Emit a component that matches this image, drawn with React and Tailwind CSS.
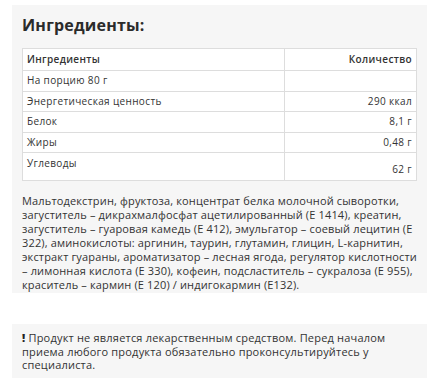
const rows = [
  ['На порцию 80 г', ''],
  ['Энергетическая ценность', '290 ккал'],
  ['Белок', '8,1 г'],
  ['Жиры', '0,48 г'],
];

const composition = [
  'Мальтодекстрин, фруктоза, концентрат белка молочной сыворотки,',
  'загуститель – дикрахмалфосфат ацетилированный (E 1414), креатин,',
  'загуститель – гуаровая камедь (E 412), эмульгатор – соевый лецитин (E',
  '322), аминокислоты: аргинин, таурин, глутамин, глицин, L-карнитин,',
  'экстракт гуараны, ароматизатор – лесная ягода, регулятор кислотности',
  '– лимонная кислота (E 330), кофеин, подсластитель – сукралоза (E 955),',
  'краситель – кармин (E 120) / индигокармин (E132).',
];

export default function App() {
  return (
    <div className="bg-white w-[439px] h-[386px] pt-[5px] text-[#333]" style={{ fontFamily: '"Open Sans", "Noto Sans", sans-serif' }}>
      <div className="mx-[12px] bg-[#f6f6f6] px-[10px] pt-[8px] pb-[1px]">
        <h2 className="text-[16px] leading-[24px] font-bold tracking-[0.2px] text-[#2b2b2b]">Ингредиенты:</h2>

        <table className="mt-[11px] w-full bg-white border-collapse text-[10px] tracking-[0.35px] text-[#333]">
          <thead>
            <tr className="h-[22px]">
              <th className="border border-[#ddd] px-[4px] text-left font-semibold">Ингредиенты</th>
              <th className="border border-[#ddd] px-[4px] text-right font-semibold">Количество</th>
            </tr>
          </thead>
          <tbody>
            {rows.map(([name, value]) => (
              <tr key={name} className="h-[20.5px]">
                <td className="border border-[#ddd] px-[4px]">{name}</td>
                <td className="border border-[#ddd] px-[4px] text-right">{value}</td>
              </tr>
            ))}
            <tr className="h-[28px]">
              <td className="border border-[#ddd] px-[4px] align-top pt-[3px]">Углеводы</td>
              <td className="border border-[#ddd] px-[4px] text-right pt-[6px]">62 г</td>
            </tr>
          </tbody>
        </table>

        <p className="mt-[13px] text-[11px] leading-[14px] tracking-[0.15px] text-[#333]">
          {composition.map((line) => (
            <span key={line} className="block whitespace-nowrap">{line}</span>
          ))}
        </p>
      </div>

      <div className="mx-[12px] mt-[31px] bg-[#f6f6f6] px-[10px] pt-[7px] pb-[6px]">
        <p className="text-[11px] leading-[13.5px] tracking-[0.2px] text-[#333]">
          <span className="block whitespace-nowrap">
            <span className="font-extrabold text-[#222]">!</span> Продукт не является лекарственным средством. Перед началом
          </span>
          <span className="block whitespace-nowrap">приема любого продукта обязательно проконсультируйтесь у</span>
          <span className="block whitespace-nowrap">специалиста.</span>
        </p>
      </div>
    </div>
  );
}
